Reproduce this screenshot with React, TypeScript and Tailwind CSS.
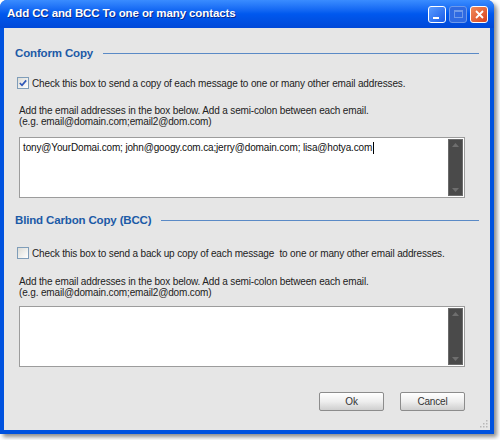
import React from "react";

function Scrollbar() {
    return <div className="w-[15px] h-full bg-[#4a4a4a] border border-[#6a6a6a] flex flex-col justify-between items-center py-[3px]">
        <svg width="7" height="4" viewBox="0 0 7 4"><path d="M0 4 L3.5 0 L7 4 Z" fill="#6e6e6e" /></svg>
        <svg width="7" height="4" viewBox="0 0 7 4"><path d="M0 0 L3.5 4 L7 0 Z" fill="#6e6e6e" /></svg>
    </div>;
}

function Checkbox({ checked }: { checked: boolean }) {
    return <div className="w-[12px] h-[12px] border border-[#7f9db9] bg-gradient-to-br from-[#dcdcd7] to-white flex items-center justify-center">
        {checked && <svg width="8" height="8" viewBox="0 0 8 8">
            <path d="M0.8 4 L3 6.3 L7.2 1.4" stroke="#2f57b8" strokeWidth="1.7" fill="none" />
        </svg>}
    </div>;
}

function Header({ title }: { title: string }) {
    return <div className="flex flex-row items-center h-[14px]">
        <span className="text-[11.5px] font-bold text-[#1c5aa6] leading-[14px] whitespace-nowrap">{title}</span>
        <div className="flex-1 ml-[10px] h-[1px] bg-[#5a8ac6]" />
    </div>;
}

function EmailBox({ value, height }: { value: string; height: string }) {
    return <div className={"ml-[4px] w-[446px] bg-white border border-[#9c9c9c] flex flex-row " + height}>
        <div className="flex-1 pl-[3px] pt-[3px] text-[10px] tracking-[-0.15px] leading-[13px] text-[#111] whitespace-nowrap">
            {value}
            {value && <span className="inline-block w-[1px] h-[12px] bg-black align-middle ml-[1px]" />}
        </div>
        <div className="py-[1px] pr-[1px]"><Scrollbar /></div>
    </div>;
}

function Button({ label }: { label: string }) {
    return <button className="w-[65px] h-[19px] rounded-[2px] border border-[#8c8c8c] bg-gradient-to-b from-white via-[#eeeeee] to-[#cfcfcf] text-[10px] text-[#333] leading-[17px]">
        {label}
    </button>;
}

export default function App() {
    return <div className="w-[500px] h-[440px] bg-white font-['Liberation_Sans',Arial,sans-serif]">
        <div className="w-[494px] h-[434px] rounded-t-[7px] bg-[#0052df] flex flex-col shadow-[3px_3px_4px_rgba(0,0,0,0.45)]">
            <div className="h-[28px] flex flex-row items-center pl-[7px] pr-[6px] rounded-t-[7px] bg-gradient-to-b from-[#3a8cff] via-[#0058ee] to-[#0048d8]">
                <span className="text-white font-bold text-[11.5px] tracking-[-0.1px] [text-shadow:1px_1px_0_#0a2a8a]">Add CC and BCC To one or many contacts</span>
                <div className="ml-auto flex flex-row gap-[3px]">
                    <div className="w-[18px] h-[17px] rounded-[3px] border border-white bg-gradient-to-br from-[#5a9bff] to-[#1a5ae8] flex items-end pl-[4px] pb-[3px]">
                        <div className="w-[6px] h-[2px] bg-white" />
                    </div>
                    <div className="w-[18px] h-[17px] rounded-[3px] border border-[#6f9aea] bg-[#2f6ae2] flex items-center justify-center">
                        <div className="w-[9px] h-[8px] border border-[#6f9aea] border-t-2" />
                    </div>
                    <div className="w-[18px] h-[17px] rounded-[3px] border border-white bg-gradient-to-br from-[#f08a5a] to-[#d8401c] flex items-center justify-center">
                        <svg width="9" height="9" viewBox="0 0 9 9"><path d="M1 1 L8 8 M8 1 L1 8" stroke="white" strokeWidth="1.8" /></svg>
                    </div>
                </div>
            </div>
            <div className="relative flex-1 mx-[4px] mb-[4px] bg-[#e6e6e6] px-[11px] text-[10px] tracking-[-0.15px] text-[#222]">
                <div className="mt-[18px]"><Header title="Conform Copy" /></div>
                <div className="mt-[16px] h-[14px] flex flex-row items-center ml-[2px] gap-[3px]">
                    <Checkbox checked={true} />
                    <span>Check this box to send a copy of each message to one or many other email addresses.</span>
                </div>
                <div className="mt-[15px] ml-[4px] leading-[11px]">
                    <div>Add the email addresses in the box below. Add a semi-colon between each email.</div>
                    <div>(e.g. email@domain.com;email2@dom.com)</div>
                </div>
                <div className="mt-[10px]">
                    <EmailBox value="tony@YourDomai.com; john@googy.com.ca;jerry@domain.com; lisa@hotya.com" height="h-[61px]" />
                </div>
                <div className="mt-[15px]"><Header title="Blind Carbon Copy (BCC)" /></div>
                <div className="mt-[19px] h-[14px] flex flex-row items-center ml-[2px] gap-[3px]">
                    <Checkbox checked={false} />
                    <span className="whitespace-pre">Check this box to send a back up copy of each message  to one or many other email addresses.</span>
                </div>
                <div className="mt-[16px] ml-[4px] leading-[11px]">
                    <div>Add the email addresses in the box below. Add a semi-colon between each email.</div>
                    <div>(e.g. email@domain.com;email2@dom.com)</div>
                </div>
                <div className="mt-[8px]">
                    <EmailBox value="" height="h-[61px]" />
                </div>
                <div className="mt-[25px] flex flex-row justify-end gap-[16px] w-[450px]">
                    <Button label="Ok" />
                    <Button label="Cancel" />
                </div>
                <svg className="absolute right-[2px] bottom-[2px]" width="8" height="8" viewBox="0 0 8 8">
                    <rect x="6" y="0" width="1.5" height="1.5" fill="#b8b8b8" />
                    <rect x="3" y="3" width="1.5" height="1.5" fill="#b8b8b8" />
                    <rect x="6" y="3" width="1.5" height="1.5" fill="#b8b8b8" />
                    <rect x="0" y="6" width="1.5" height="1.5" fill="#b8b8b8" />
                    <rect x="3" y="6" width="1.5" height="1.5" fill="#b8b8b8" />
                    <rect x="6" y="6" width="1.5" height="1.5" fill="#b8b8b8" />
                </svg>
            </div>
        </div>
    </div>;
}
